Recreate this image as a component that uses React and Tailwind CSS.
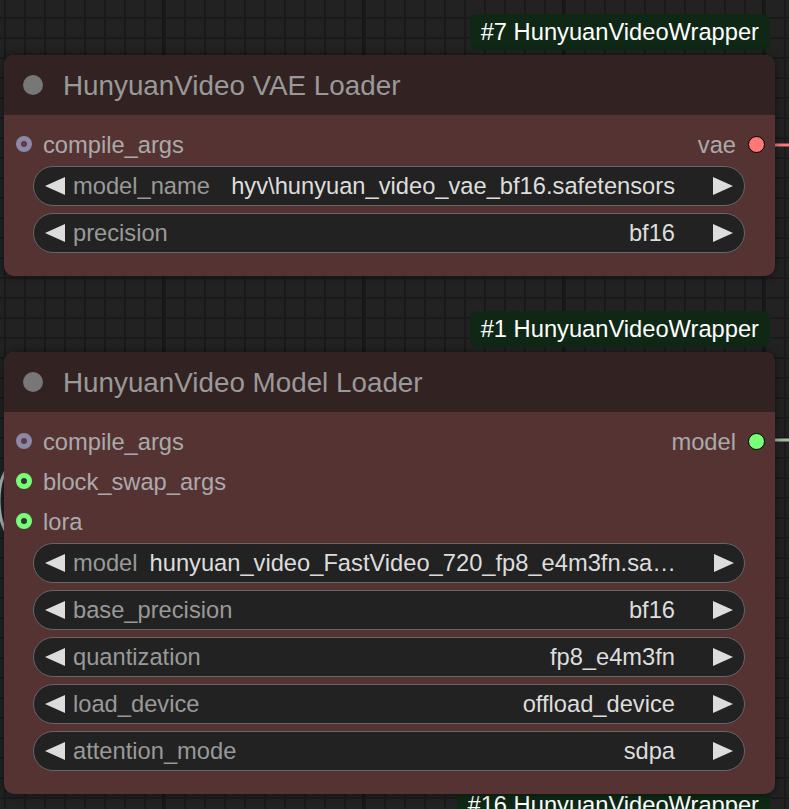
import React from "react";

const vaeNode = {
  badge: "#7 HunyuanVideoWrapper",
  title: "HunyuanVideo VAE Loader",
  inputs: [{ name: "compile_args", kind: "args" }],
  output: { name: "vae", color: "bg-[#ff7777]" },
  widgets: [
    { label: "model_name", value: "hyv\\hunyuan_video_vae_bf16.safetensors" },
    { label: "precision", value: "bf16" },
  ],
};

const modelNode = {
  badge: "#1 HunyuanVideoWrapper",
  title: "HunyuanVideo Model Loader",
  inputs: [
    { name: "compile_args", kind: "args" },
    { name: "block_swap_args", kind: "green" },
    { name: "lora", kind: "green" },
  ],
  output: { name: "model", color: "bg-[#77ff77]" },
  widgets: [
    { label: "model", value: "hunyuan_video_FastVideo_720_fp8_e4m3fn.sa…" },
    { label: "base_precision", value: "bf16" },
    { label: "quantization", value: "fp8_e4m3fn" },
    { label: "load_device", value: "offload_device" },
    { label: "attention_mode", value: "sdpa" },
  ],
};

const Arrow = ({ left }) => (
  <svg width="20" height="18" viewBox="0 0 20 18" className="shrink-0">
    <polygon points={left ? "20,0 0,9 20,18" : "0,0 20,9 0,18"} fill="#dddddd" />
  </svg>
);

const Badge = ({ text }) => (
  <div className="flex justify-end pr-[5px]">
    <div className="h-[36px] px-[11px] pt-[2px] rounded-[8px] bg-[#0f2815] text-white text-[23.7px] flex items-center whitespace-nowrap">
      {text}
    </div>
  </div>
);

const Widget = ({ label, value }) => (
  <div className="h-[40px] ml-[29px] mr-[30px] rounded-full bg-[#222222] border-[1.5px] border-[#666666] flex items-center pl-[11px] pr-[11px] text-[23.7px]">
    <Arrow left />
    <span className="ml-[8px] pt-[2px] text-[#999999] whitespace-nowrap">{label}</span>
    <span className="flex-1 pt-[2px] text-right text-[#dddddd] whitespace-nowrap ml-[12px]">{value}</span>
    <span className="ml-[38px]">
      <Arrow />
    </span>
  </div>
);

const Node = ({ node }) => (
  <div className="relative z-10 w-[771px] rounded-[10px] bg-[#553333] overflow-hidden shadow-[0_0_8px_rgba(0,0,0,0.5)]">
    <div className="h-[60px] bg-[#332222] flex items-center pl-[19px]">
      <div className="w-[20px] h-[20px] rounded-full bg-[#777777]" />
      <span className="ml-[20px] pt-[2px] text-[27.8px] text-[#999999] whitespace-nowrap">{node.title}</span>
    </div>
    <div className="pt-[9px] pb-[23px]">
      {node.inputs.map((inp, i) => (
        <div key={inp.name} className="h-[40px] flex items-center pl-[12px] pr-[10px] text-[23.7px]">
          <div
            className={`w-[16px] h-[16px] rounded-full border-[5px] ${
              inp.kind === "args" ? "border-[#8a8aa6] bg-[#5e3a48]" : "border-[#77ff77] bg-[#343434]"
            }`}
          />
          <span className="ml-[11px] pt-[3px] text-[#aaaaaa]">{inp.name}</span>
          {i === 0 && (
            <>
              <span className="ml-auto pt-[3px] text-[#aaaaaa]">{node.output.name}</span>
              <div className={`ml-[12px] w-[17px] h-[17px] rounded-full border-[1.5px] border-black ${node.output.color}`} />
            </>
          )}
        </div>
      ))}
      <div className="mt-[2px] flex flex-col gap-[7px]">
        {node.widgets.map((w) => (
          <Widget key={w.label} label={w.label} value={w.value} />
        ))}
      </div>
    </div>
  </div>
);

export default function App() {
  return (
    <div className="relative w-full h-[809px] overflow-hidden font-['Liberation_Sans',Arial,sans-serif] bg-[#222222] bg-[linear-gradient(to_right,#161616_2px,transparent_2px),linear-gradient(to_right,#1a1a1a_2px,transparent_2px),linear-gradient(to_bottom,#1a1a1a_2px,transparent_2px)] bg-[size:200px_200px,20px_20px,20px_20px] bg-[position:162px_0,4px_0,0_17px]">
      <svg className="absolute inset-0 z-0" width="789" height="809">
        <line x1="770" y1="145" x2="789" y2="145" stroke="#ff7777" strokeWidth="3" />
        <line x1="770" y1="440" x2="789" y2="440" stroke="#a4bca4" strokeWidth="3" />
        <path d="M 14 464 C -6 470, -6 530, 14 540" stroke="#b5b5b5" strokeWidth="3" fill="none" />
      </svg>
      <div className="relative flex flex-col pl-[4px] pt-[14px] w-[775px]">
        <Badge text={vaeNode.badge} />
        <div className="mt-[5px]">
          <Node node={vaeNode} />
        </div>
        <div className="mt-[35px]">
          <Badge text={modelNode.badge} />
        </div>
        <div className="mt-[5px]">
          <Node node={modelNode} />
        </div>
        <div className="-mt-[7px] relative z-0">
          <Badge text="#16 HunyuanVideoWrapper" />
        </div>
      </div>
    </div>
  );
}
